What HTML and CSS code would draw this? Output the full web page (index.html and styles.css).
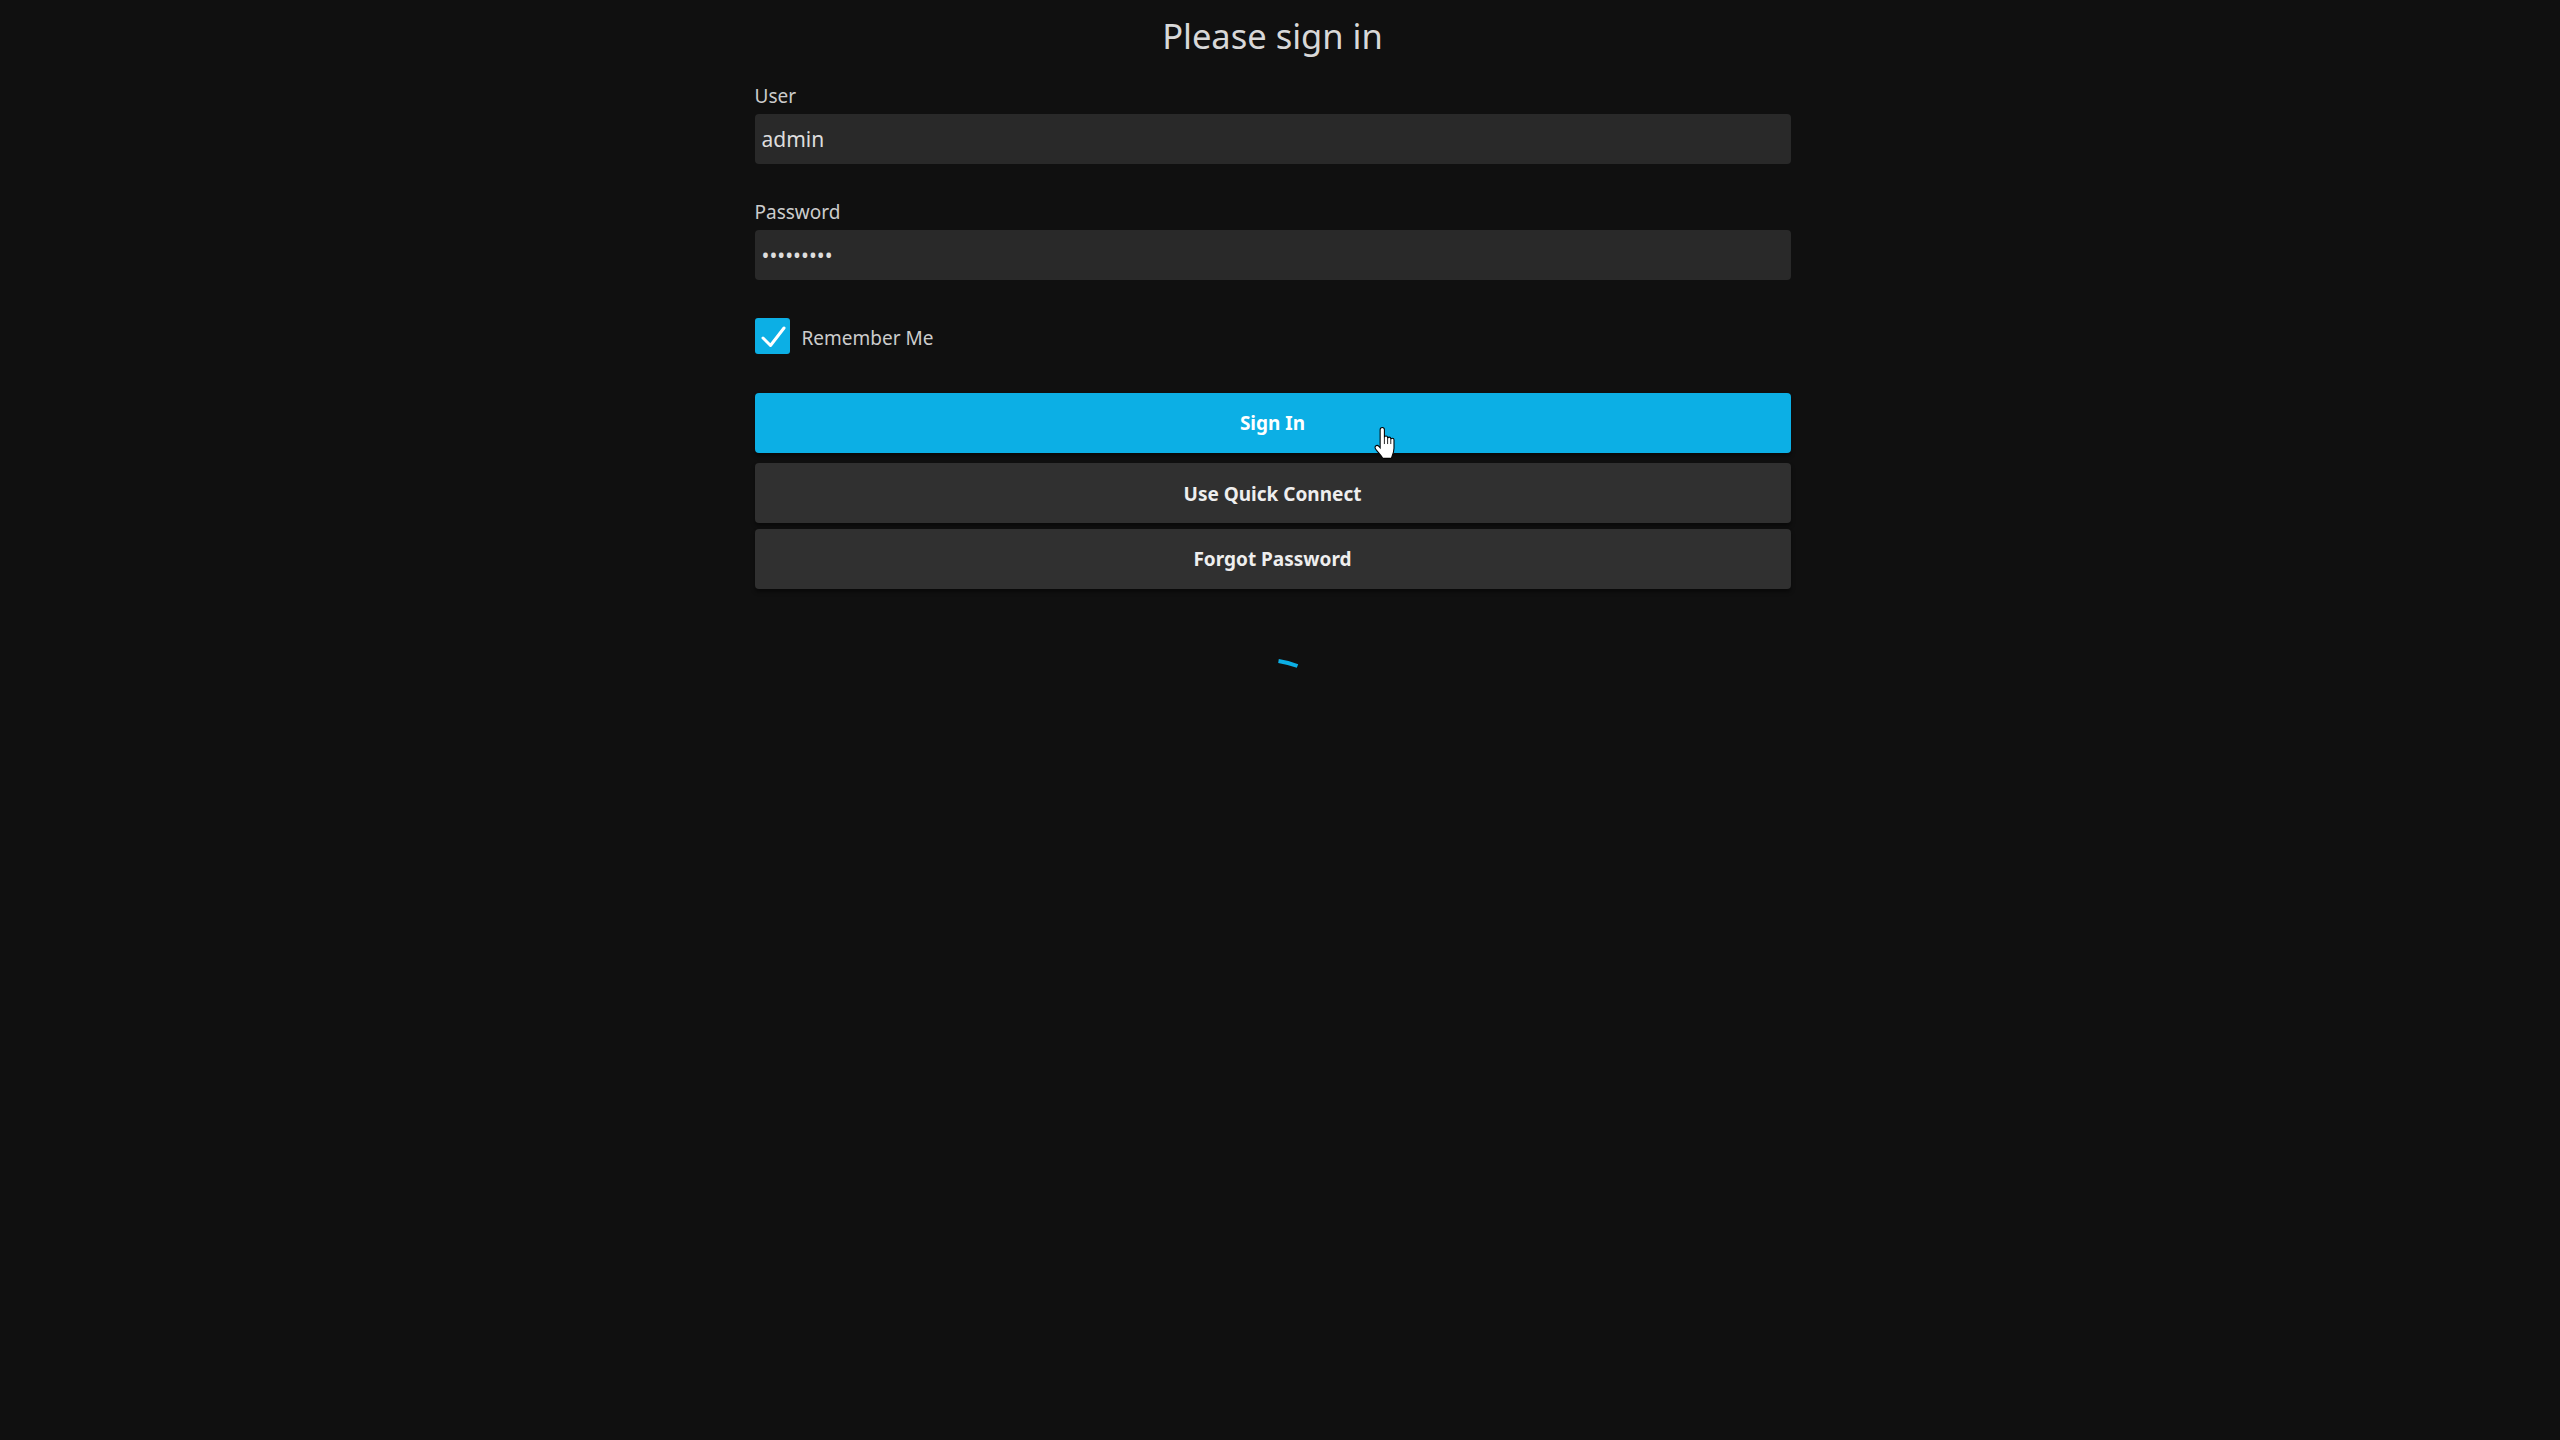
FILE: index.html
```html
<!DOCTYPE html>
<html lang="en">
<head>
    <meta charset="UTF-8">
    <meta name="viewport" content="width=device-width, initial-scale=1.0">
    <title>Please sign in</title>
    <link rel="stylesheet" href="styles.css">
</head>
<body>
    <div class="page">
        <div class="login">
            <h1 class="title">Please sign in</h1>
            <div class="field">
                <label class="field-label" for="user">User</label>
                <input class="field-input" id="user" type="text" value="admin">
            </div>
            <div class="field">
                <label class="field-label" for="password">Password</label>
                <input class="field-input" id="password" type="password" value="123456789">
            </div>
            <label class="remember">
                <span class="checkbox">
                    <svg width="35" height="36" viewBox="0 0 35 36">
                        <path d="M8 20 L15.5 27.5 L29 10" fill="none" stroke="#fff" stroke-width="3" stroke-linecap="round" stroke-linejoin="round"/>
                    </svg>
                </span>
                <span class="remember-text">Remember Me</span>
            </label>
            <button class="btn btn-primary">Sign In</button>
            <button class="btn btn-quick">Use Quick Connect</button>
            <button class="btn">Forgot Password</button>
            <div class="spinner">
                <svg width="60" height="40" viewBox="0 0 60 40">
                    <path d="M35.5 21 Q45 22.4 54.5 26" fill="none" stroke="#0cafe5" stroke-width="4"/>
                </svg>
            </div>
        </div>
    </div>

    <svg class="cursor" width="24" height="33" viewBox="0 0 22 31">
        <path d="M7.5 0.5 C8.6 0.5 9.5 1.4 9.5 2.5 V10 C9.5 9.1 10.2 8.5 11 8.5 C11.8 8.5 12.5 9.2 12.5 10 V11 C12.5 10.2 13.2 9.5 14 9.5 C14.8 9.5 15.5 10.2 15.5 11 V12 C15.5 11.2 16.2 10.5 17 10.5 C17.8 10.5 18.5 11.2 18.5 12 V20 C18.5 24 17 27 16 29.5 H8 C7 27 3.5 24 1.2 20.6 C0.4 19.5 0.6 18.2 1.6 17.6 C2.6 17 3.7 17.5 4.4 18.3 L5.5 19.6 V2.5 C5.5 1.4 6.4 0.5 7.5 0.5 Z" fill="#fff" stroke="#000" stroke-width="1"/>
        <path d="M9.5 10 V16 M12.5 11 V16 M15.5 12 V16" fill="none" stroke="#000" stroke-width="0.8"/>
    </svg>
</body>
</html>
```

FILE: styles.css
```css
html, body {
    margin: 0;
    padding: 0;
}
body {
    background-color: #101010;
    color: #cccccc;
    font-family: "Noto Sans", "Open Sans", sans-serif;
    font-size: 19px;
    min-height: 1440px;
}
.page {
    padding: 15px 15px 0 0;
    display: flex;
    justify-content: center;
}
.login {
    width: 1036px;
    display: flex;
    flex-direction: column;
}
.title {
    margin: 0 0 26px 0;
    font-size: 34.5px;
    font-weight: 400;
    line-height: 42px;
    text-align: center;
    color: #d8d8d8;
}
.field {
    display: flex;
    flex-direction: column;
    margin-bottom: 35px;
}
.field-label {
    font-size: 19px;
    line-height: 26px;
    margin-bottom: 5px;
    color: #cccccc;
}
.field-input {
    box-sizing: border-box;
    width: 100%;
    height: 50px;
    padding: 0 7px;
    border: none;
    border-radius: 4px;
    background-color: #292929;
    color: #dddddd;
    font-family: "Noto Sans", "Open Sans", sans-serif;
    font-size: 21px;
    outline: none;
}
.remember {
    display: flex;
    align-items: center;
    gap: 12px;
    height: 36px;
    margin-top: 3px;
    margin-bottom: 39px;
}
.checkbox {
    display: block;
    width: 35px;
    height: 36px;
    border-radius: 3px;
    background-color: #0cafe5;
}
.checkbox svg {
    display: block;
}
.remember-text {
    font-size: 19px;
    color: #cccccc;
    padding-top: 4px;
}
.btn {
    display: block;
    width: 100%;
    height: 60px;
    margin: 0 0 6px 0;
    border: none;
    border-radius: 4px;
    background-color: #303030;
    color: #eeeeee;
    font-family: "Noto Sans", "Open Sans", sans-serif;
    font-size: 19px;
    font-weight: 700;
    box-shadow: 0 3px 4px rgba(0, 0, 0, 0.45);
    cursor: pointer;
}
.btn-primary {
    background-color: #0cafe5;
    color: #ffffff;
    margin-bottom: 10px;
}
.btn-quick {
    padding-top: 2px;
}
.spinner {
    display: flex;
    justify-content: center;
    margin-top: 45px;
}
.cursor {
    position: absolute;
    left: 1374px;
    top: 427px;
}
```
